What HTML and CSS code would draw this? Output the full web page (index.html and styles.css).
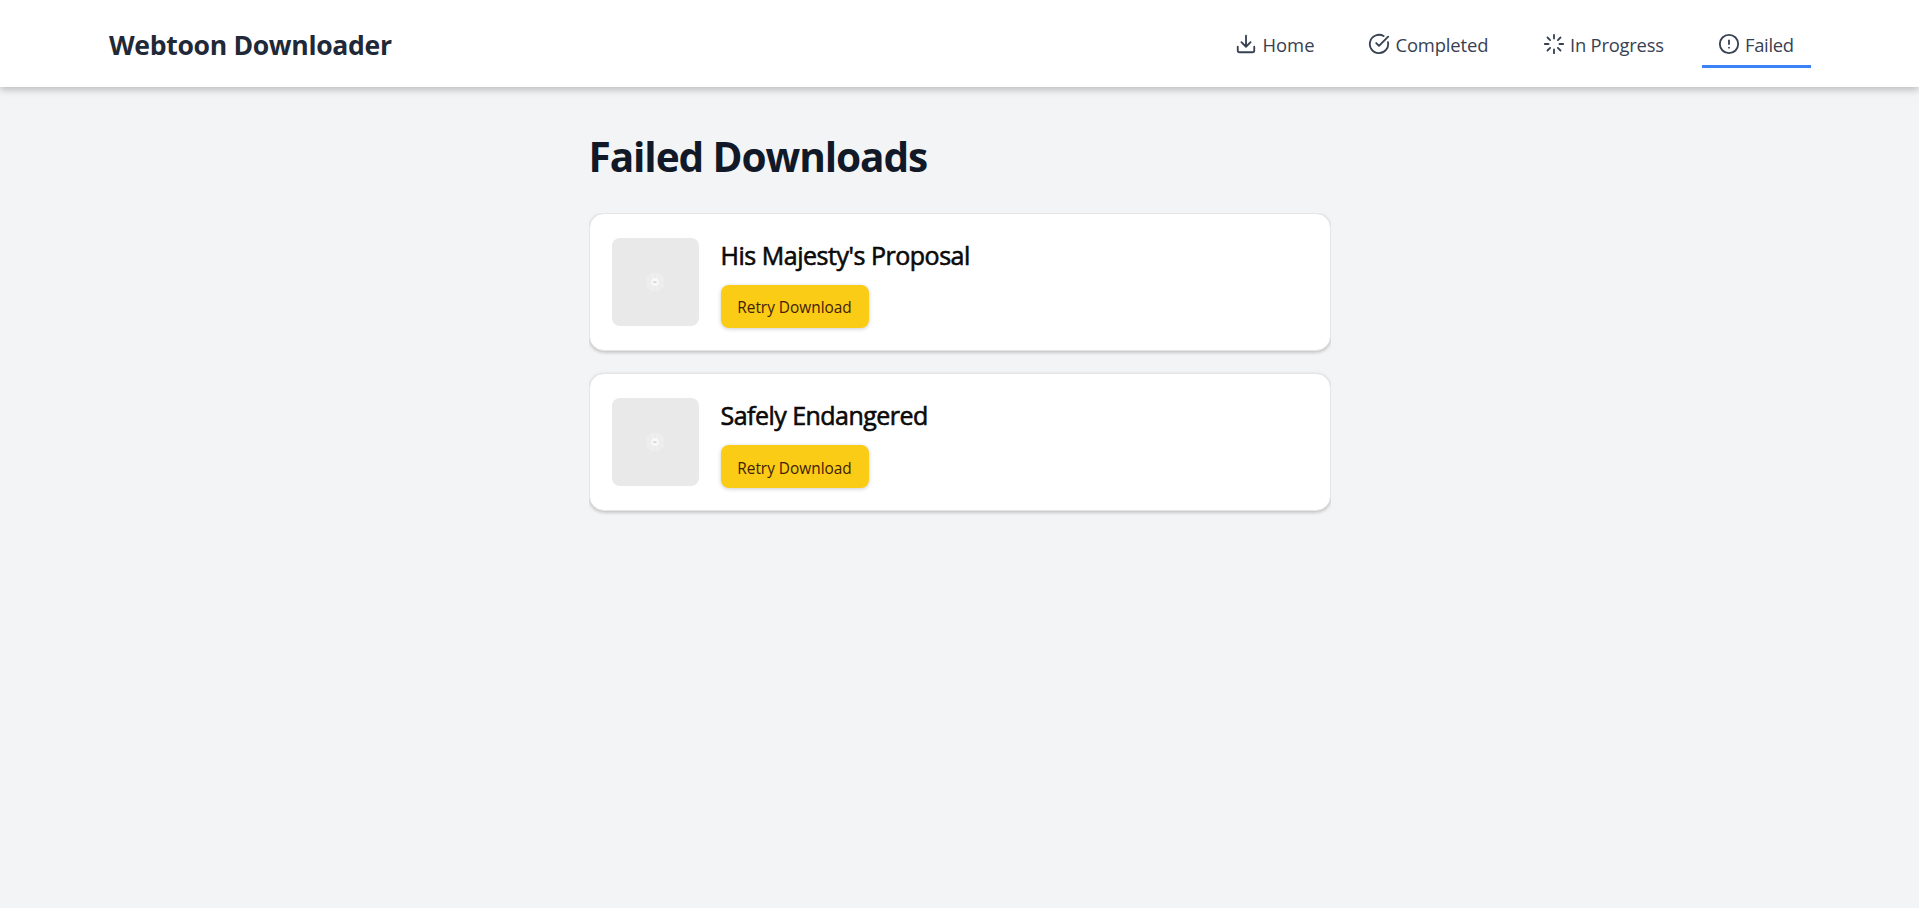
FILE: index.html
```html
<!DOCTYPE html>
<html lang="en">
<head>
<meta charset="utf-8">
<title>Webtoon Downloader</title>
<link rel="stylesheet" href="styles.css">
</head>
<body>
<header class="header">
  <div class="brand">Webtoon Downloader</div>
  <nav class="nav">
    <a class="nav-item home"><svg class="icon" viewBox="0 0 24 24"><path d="M21 15v4a2 2 0 0 1-2 2H5a2 2 0 0 1-2-2v-4M7 10l5 5 5-5M12 15V3"/></svg><span class="label">Home</span></a>
    <a class="nav-item completed"><svg class="icon" viewBox="0 0 24 24"><path d="M21.800 10A10 10 0 1 1 17 3.335M22 4 12 14.01l-3-3"/></svg><span class="label">Completed</span></a>
    <a class="nav-item progress"><svg class="icon" viewBox="0 0 24 24"><path d="M12 2v4M12 18v4M4.93 4.93l2.83 2.83M16.24 16.24l2.83 2.83M2 12h4M18 12h4M4.93 19.07l2.83-2.83M16.24 7.76l2.83-2.83"/></svg><span class="label">In Progress</span></a>
    <a class="nav-item failed active"><svg class="icon" viewBox="0 0 24 24"><circle cx="12" cy="12" r="10"/><path d="M12 8v4M12 16h.01"/></svg><span class="label">Failed</span></a>
  </nav>
</header>
<main class="main">
  <h1 class="heading"><span>Failed Downloads</span></h1>
  <div class="list">
    <article class="card">
      <div class="thumb"><svg class="spinner" viewBox="0 0 24 24"><circle class="ring" cx="12" cy="12" r="9.5"/><path class="spokes" d="M12 0v24M0 12h24M3.5 3.5l17 17M20.500 3.500l-17 17"/><circle class="core" cx="12" cy="12" r="4"/><path class="dot" d="M10.500 11.500h3v1.300h-3z"/></svg></div>
      <div class="info"><h2 class="title majesty">His Majesty's Proposal</h2><button class="retry"><span>Retry Download</span></button></div>
    </article>
    <article class="card">
      <div class="thumb"><svg class="spinner" viewBox="0 0 24 24"><circle class="ring" cx="12" cy="12" r="9.5"/><path class="spokes" d="M12 0v24M0 12h24M3.5 3.5l17 17M20.500 3.500l-17 17"/><circle class="core" cx="12" cy="12" r="4"/><path class="dot" d="M10.500 11.500h3v1.300h-3z"/></svg></div>
      <div class="info"><h2 class="title safely">Safely Endangered</h2><button class="retry low"><span>Retry Download</span></button></div>
    </article>
  </div>
</main>
</body>
</html>
```

FILE: styles.css
```css
* { box-sizing: border-box; }
body { margin: 0; min-height: 100vh; background: #f3f4f6; font-family: "Open Sans", "Noto Sans", sans-serif; }
.header { height: 87px; padding: 0 108px 0 109px; display: flex; justify-content: space-between; align-items: center; background: #fff; box-shadow: 0 4px 7px rgba(0,0,0,.12), 0 0 8px rgba(0,0,0,.17); }
.brand { font-size: 26.6px; line-height: 36px; font-weight: 700; letter-spacing: -.34px; color: #1f2937; padding-top: 3px; white-space: nowrap; }
.nav { display: flex; gap: 22px; padding-top: 3px; }
.nav-item { height: 45px; display: flex; align-items: center; padding-left: 15.5px; border-bottom: 3px solid transparent; color: #374151; font-size: 18.4px; white-space: nowrap; }
.home { width: 111px; }
.completed { width: 152.5px; letter-spacing: -.14px; }
.progress { width: 153px; letter-spacing: -.22px; }
.failed { width: 109px; letter-spacing: -.3px; }
.active { border-color: #3b82f6; }
.icon { width: 22px; height: 22px; margin-right: 5.5px; fill: none; stroke: currentColor; stroke-width: 2; stroke-linecap: round; stroke-linejoin: round; flex: none; }
.label { display: block; line-height: 24px; padding-top: 2px; }
.main { width: 742px; margin: 0 auto; padding-top: 44px; }
.heading { margin: 0; height: 82px; font-size: 40.6px; line-height: 52px; font-weight: 700; letter-spacing: -1.1px; color: #111827; white-space: nowrap; }
.list { display: flex; flex-direction: column; gap: 22px; padding-bottom: 22px; overflow: hidden; }
.card { height: 138px; display: flex; align-items: flex-start; gap: 22px; padding: 24px 22px; background: #fff; border: 1px solid #e5e5e5; border-radius: 15px; box-shadow: 0 1px 4px rgba(0,0,0,.13), 0 2px 3px rgba(0,0,0,.1); }
.thumb { width: 87px; height: 88px; border-radius: 8px; background: #e9e9e9; display: flex; align-items: center; justify-content: center; }
.spinner { width: 24px; height: 24px; fill: none; }
.ring { fill: #eeeeee; }
.spokes { stroke: #e7e7e7; stroke-width: .7; }
.core { fill: #f8f8f8; }
.dot { fill: #c8c8c8; }
.title { margin: 0 0 13px; font-size: 25px; line-height: 34px; font-weight: 400; -webkit-text-stroke: .6px #0c0a09; color: #0c0a09; white-space: nowrap; }
.majesty { letter-spacing: -.48px; }
.safely { letter-spacing: -.53px; }
.retry { display: block; width: 148px; height: 43px; padding: 3px 0 0; border: 0; border-radius: 8px; background: #facc15; color: #422006; font: 400 15.4px/22px "Open Sans", sans-serif; box-shadow: 0 1px 4px rgba(0,0,0,.2); white-space: nowrap; }
.low { padding-top: 5px; }
```
